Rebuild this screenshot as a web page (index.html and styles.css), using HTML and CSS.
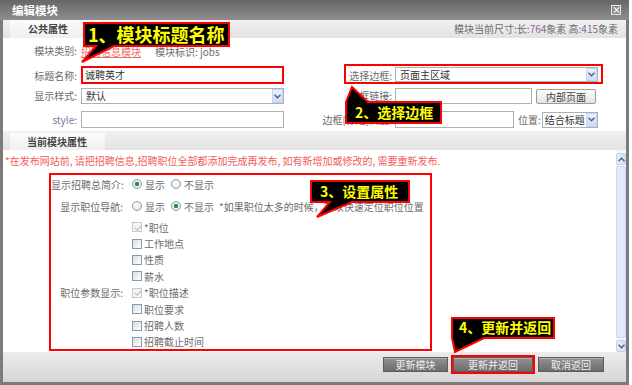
FILE: index.html
```html
<!DOCTYPE html>
<html>
<head>
	<meta charset="utf-8">
	<link rel="stylesheet" href="styles.css">
</head>
<body>
<div class="screen">
	<div class="window">
		<div class="titlebar">
			<span class="title">编辑模块</span>
			<span class="close">×</span>
		</div>

		<div class="sect-head">
			<span class="tab">公共属性</span>
			<span class="size">模块当前尺寸:长:<b>764</b>象素 高:<b>415</b>象素</span>
		</div>

		<div class="common">
			<label class="lbl lbl-a">模块类别:</label>
			<div class="cell cell-a"><a class="mlink">招聘信息模块</a><span class="mid">模块标识: jobs</span></div>
			<div></div>
			<div></div>

			<label class="lbl">标题名称:</label>
			<div class="field f-title">诚聘英才</div>
			<label class="lbl lbl-r">选择边框:</label>
			<div class="select s-border"><span class="sval">页面主区域</span><span class="arr"><svg width="7" height="5" viewBox="0 0 7 5"><polyline points="0.5,0.8 3.5,3.8 6.5,0.8"/></svg></span></div>

			<label class="lbl">显示样式:</label>
			<div class="select s-style"><span class="sval">默认</span><span class="arr"><svg width="7" height="5" viewBox="0 0 7 5"><polyline points="0.5,0.8 3.5,3.8 6.5,0.8"/></svg></span></div>
			<label class="lbl lbl-r">边框链接:</label>
			<div class="cell"><div class="field f-link"></div><span class="ibtn">内部页面</span></div>

			<label class="lbl lbl-style">style:</label>
			<div class="field f-css"></div>
			<label class="lbl lbl-r">边框[标题]高度:</label>
			<div class="cell"><div class="field f-bh"></div><span class="pos">位置:</span><div class="select s-pos"><span class="sval">结合标题</span><span class="arr"><svg width="7" height="5" viewBox="0 0 7 5"><polyline points="0.5,0.8 3.5,3.8 6.5,0.8"/></svg></span></div></div>
		</div>

		<div class="sect-head sect-head2">
			<span class="tab tab2">当前模块属性</span>
		</div>

		<div class="scroll">
			<div class="content">
				<p class="note">*在发布网站前, 请把招聘信息,招聘职位全部都添加完成再发布, 如有新增加或修改的, 需要重新发布.</p>
				<div class="props">
					<span class="plbl">显示招聘总简介:</span>
					<div class="pval"><i class="radio on"></i>显示<i class="radio r2"></i>不显示</div>

					<span class="plbl">显示职位导航:</span>
					<div class="pval"><i class="radio"></i>显示<i class="radio r2 on"></i>不显示<span class="hint">*如果职位太多的时候，可以快速定位职位位置</span></div>

					<div class="pval"><i class="chk on"></i>*职位</div>
					<div class="pval"><i class="chk"></i>工作地点</div>
					<div class="pval"><i class="chk"></i>性质</div>
					<div class="pval"><i class="chk"></i>薪水</div>
					<div class="pval"><i class="chk on"></i>*职位描述</div>
					<div class="pval"><i class="chk"></i>职位要求</div>
					<div class="pval"><i class="chk"></i>招聘人数</div>
					<div class="pval"><i class="chk"></i>招聘截止时间</div>
					<span class="plbl plbl-param">职位参数显示:</span>
				</div>
			</div>
			<div class="scrollbar">
				<span class="sbtn"><svg width="7" height="5" viewBox="0 0 7 5"><polyline points="0.5,4.2 3.5,1.2 6.5,4.2"/></svg></span>
				<span class="thumb"></span>
				<span class="sbtn"><svg width="7" height="5" viewBox="0 0 7 5"><polyline points="0.5,0.8 3.5,3.8 6.5,0.8"/></svg></span>
			</div>
		</div>

		<div class="footer">
			<span class="btn btn-a">更新模块</span>
			<span class="btn btn-b">更新并返回</span>
			<span class="btn btn-c">取消返回</span>
		</div>
	</div>

	<!-- annotations drawn over the dialog -->
	<div class="hl hl-border"></div>
	<svg class="callouts" width="632" height="385" viewBox="0 0 632 385">
		<path d="M84,23 H229 V46 H114 L82,62 L96,46 H84 Z"/>
		<path d="M346,123 V102 L352,87 L368,102 H441 V123 Z"/>
		<path d="M311,181 H409 V202 H352 L317,217 L330,202 H311 Z"/>
		<path d="M452,318 H554 V338 H484 L455,352 L452,338 Z"/>
	</svg>
	<div class="tip tip1">1、模块标题名称</div>
	<div class="tip tip2">2、选择边框</div>
	<div class="tip tip3">3、设置属性</div>
	<div class="tip tip4">4、更新并返回</div>
</div>
</body>
</html>
```

FILE: styles.css
```css
body {
	margin: 0;
	background: #ffffff;
	font-family: "Noto Sans CJK SC", "Liberation Sans", sans-serif;
	font-size: 10px;
	color: #6b6b6b;
}

.screen {
	position: relative;
	width: 632px;
	height: 385px;
}

.window {
	width: 629px;
	height: 385px;
	box-sizing: border-box;
	border: 3px solid #7b7b7b;
	border-top: 0;
	background: #ffffff;
	display: flex;
	flex-direction: column;
}

/* title bar */
.titlebar {
	height: 20px;
	flex: none;
	margin: 0 -3px;
	padding: 0 8px 0 12px;
	background: linear-gradient(#676767, #8e8e8e);
	display: flex;
	align-items: center;
	justify-content: space-between;
}

.title {
	color: #ffffff;
	font-size: 11.5px;
	font-weight: bold;
}

.close {
	width: 10px;
	height: 10px;
	box-sizing: border-box;
	border: 1px solid #e6e6e6;
	background: #8c8c8c;
	color: #ffffff;
	font-size: 9px;
	font-weight: bold;
	line-height: 7px;
	text-align: center;
}

/* section headers */
.sect-head {
	height: 18px;
	flex: none;
	padding-left: 7px;
	background: linear-gradient(#f1f1f1, #e2e2e2);
	display: flex;
	justify-content: space-between;
	align-items: stretch;
}

.sect-head2 {
	height: 19px;
}

.tab {
	width: 90px;
	box-sizing: border-box;
	padding-left: 18px;
	background: linear-gradient(#fbfbfb, #efefef);
	color: #444444;
	font-weight: bold;
	line-height: 18px;
}

.tab2 {
	width: 95px;
	padding-left: 17px;
	margin-top: 2px;
	line-height: 17px;
}

.size {
	padding-right: 8px;
	line-height: 18px;
	color: #6b6b6b;
}

.size b {
	font-weight: normal;
	color: #86679a;
}

/* common properties */
.common {
	flex: none;
	height: 93px;
	box-sizing: border-box;
	padding-top: 5px;
	display: grid;
	grid-template-columns: 78px 206px 108px 208px;
	grid-template-rows: 16px 25px 20px 24px;
	align-items: end;
}

.lbl {
	text-align: right;
	padding-right: 4px;
	line-height: 17px;
	white-space: nowrap;
}

.lbl-a {
	line-height: 16px;
}

.lbl-r {
	padding-right: 3px;
}

.lbl-style {
	color: #84739a;
}

.cell {
	display: flex;
	align-items: center;
}

.cell-a {
	height: 16px;
}

.mlink {
	width: 60px;
	color: #f06a6a;
	text-decoration: underline;
	white-space: nowrap;
}

.mid {
	margin-left: 14px;
	white-space: nowrap;
}

.field {
	height: 17px;
	box-sizing: border-box;
	border: 1px solid #a9b1bb;
	background: #ffffff;
	color: #333333;
	padding-left: 3px;
	line-height: 15px;
}

.f-title {
	width: 203px;
	height: 18px;
	border: 2px solid #ff0000;
	padding-left: 2px;
	line-height: 14px;
}

.f-css {
	width: 203px;
}

.f-link {
	width: 137px;
	height: 16px;
}

.f-bh {
	width: 119px;
}

.select {
	height: 16px;
	box-sizing: border-box;
	border: 1px solid #a9b1bb;
	background: #ffffff;
	color: #333333;
	display: flex;
	align-items: stretch;
}

.sval {
	flex: 1;
	padding-left: 4px;
	line-height: 14px;
	white-space: nowrap;
	overflow: hidden;
}

.arr {
	width: 11px;
	box-sizing: border-box;
	border: 1px solid #c6d4ef;
	background: linear-gradient(#eaf0fb, #cfdcf5);
	display: flex;
	align-items: center;
	justify-content: center;
}

.arr polyline,
.sbtn polyline {
	fill: none;
	stroke: #4d6185;
	stroke-width: 1.4;
}

.s-border {
	width: 203px;
	height: 15px;
	margin-bottom: 2px;
}

.s-style {
	width: 203px;
}

.s-pos {
	width: 56px;
	margin-left: 1px;
}

.s-pos .sval {
	padding-left: 2px;
}

.ibtn {
	width: 60px;
	height: 15px;
	margin-left: 4px;
	box-sizing: border-box;
	border: 1px solid #9c9c9c;
	border-radius: 2px;
	background: linear-gradient(#fdfdfd, #e3e3e3);
	color: #444444;
	text-align: center;
	line-height: 13px;
}

.pos {
	margin-left: 4px;
	line-height: 17px;
}

/* current module properties */
.scroll {
	height: 202px;
	flex: none;
	display: flex;
	overflow: hidden;
}

.content {
	flex: 1;
	padding-top: 5px;
}

.note {
	margin: 0 0 6px 2px;
	line-height: 12px;
	color: #f25c5c;
	white-space: nowrap;
}

.props {
	width: 383px;
	height: 178px;
	margin-left: 46px;
	box-sizing: border-box;
	border: 2px solid #ff0000;
	display: grid;
	grid-template-columns: 76px 1fr;
	grid-template-rows: 18px 26px repeat(8, 16.4px);
	align-items: center;
}

.plbl {
	grid-column: 1;
	text-align: right;
	padding-right: 4px;
	white-space: nowrap;
}

.plbl-param {
	grid-row: 7;
}

.pval {
	grid-column: 2;
	padding-left: 5px;
	display: flex;
	align-items: center;
	white-space: nowrap;
}

.hint {
	margin-left: 5px;
}

.radio {
	width: 10px;
	height: 10px;
	margin-right: 3px;
	box-sizing: border-box;
	border: 1px solid #7f9db9;
	border-radius: 50%;
	background: radial-gradient(circle at 40% 40%, #ffffff, #dedede);
}

.radio.on {
	background: radial-gradient(circle, #3f8a3f 0 2px, #f8f8f8 2.6px, #dedede);
}

.r2 {
	margin-left: 6px;
}

.chk {
	position: relative;
	width: 10px;
	height: 10px;
	margin-right: 2px;
	box-sizing: border-box;
	border: 1px solid #7f9db9;
	background: linear-gradient(135deg, #dcdcd6, #ffffff);
}

.chk.on {
	border-color: #c9c9c9;
	background: #f5f5f5;
}

.chk.on::after {
	content: "";
	position: absolute;
	left: 2.5px;
	top: 0.5px;
	width: 2.5px;
	height: 5px;
	border: solid #b9b9b9;
	border-width: 0 1.5px 1.5px 0;
	transform: rotate(40deg);
}

.scrollbar {
	width: 10px;
	flex: none;
	padding: 3px 0 0;
	background: #f3f6fb;
	display: flex;
	flex-direction: column;
}

.sbtn {
	height: 12px;
	flex: none;
	box-sizing: border-box;
	border: 1px solid #c3d1ec;
	border-radius: 2px;
	background: linear-gradient(90deg, #e9effb, #d3def5);
	display: flex;
	align-items: center;
	justify-content: center;
}

.thumb {
	flex: 1;
	margin: 1px 0 2px;
	border: 1px solid #cfdbf2;
	border-radius: 2px;
	background: #e2eafa;
}

/* footer buttons */
.footer {
	flex: 1;
	padding: 5px 22px 0 0;
	background: linear-gradient(#ececec, #d5d5d5);
	display: flex;
	justify-content: flex-end;
	align-items: flex-start;
	gap: 5px;
}

.btn {
	height: 15px;
	box-sizing: border-box;
	border: 1px solid #5c5c5c;
	background: linear-gradient(#929292, #6c6c6c);
	box-shadow: inset 0 1px 0 #b0b0b0;
	color: #eeeeee;
	text-align: center;
	line-height: 13px;
}

.btn-a {
	width: 65px;
}

.btn-b {
	width: 80px;
	outline: 2px solid #ff0000;
	outline-offset: 0;
}

.btn-c {
	width: 66px;
}

/* annotations */
.hl {
	position: absolute;
	box-sizing: border-box;
	border: 2px solid #ff0000;
}

.hl-border {
	left: 344px;
	top: 64px;
	width: 259px;
	height: 20px;
}

.callouts {
	position: absolute;
	left: 0;
	top: 0;
}

.callouts path {
	fill: #000000;
	stroke: #ff0000;
	stroke-width: 2;
	stroke-linejoin: miter;
}

.tip {
	position: absolute;
	color: #ffff00;
	font-weight: bold;
	font-size: 14px;
	white-space: nowrap;
}

.tip1 {
	left: 88px;
	top: 22px;
	font-size: 18px;
	line-height: 25px;
}

.tip2 {
	left: 355px;
	top: 101px;
	line-height: 22px;
}

.tip3 {
	left: 320px;
	top: 180px;
	line-height: 22px;
}

.tip4 {
	left: 459px;
	top: 317px;
	line-height: 21px;
}
```
